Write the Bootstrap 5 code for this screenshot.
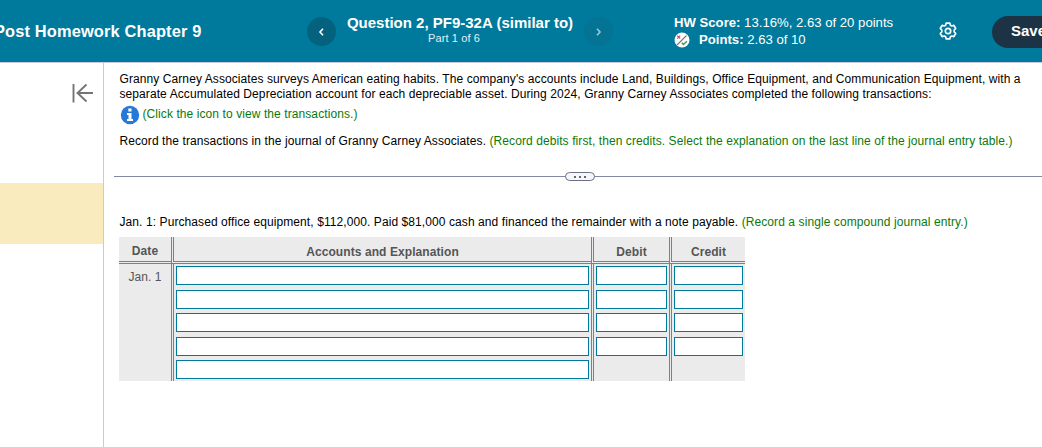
<!DOCTYPE html>
<html lang="en">
<head>
  <meta charset="UTF-8">
  <meta name="viewport" content="width=device-width, initial-scale=1.0">
  <title>Post Homework Chapter 9</title>
  <link rel="stylesheet" href="https://cdn.jsdelivr.net/npm/bootstrap@5.3.0/dist/css/bootstrap.min.css">
  <style>
    body {
      font-family: "Liberation Sans", Arial, sans-serif;
      font-size: 12px;
      line-height: 15px;
      color: #000;
      height: 100vh;
    }

    .top-bar {
      height: 63px;
      padding-top: 1px;
      background: #007a9c;
      border-bottom: 1px solid #c9cce0;
    }

    .hw-title {
      width: 309px;
      margin-left: -6px;
      padding-bottom: 2px;
      font-size: 16.4px;
      letter-spacing: 0.15px;
      line-height: 20px;
    }

    .nav-circle {
      width: 29px;
      height: 29px;
      background: #05627f;
    }

    .nav-circle.next {
      background: #047394;
      color: #9fcbd8;
    }

    .question-box {
      width: 248px;
      padding-bottom: 3px;
    }

    .question-name {
      font-size: 15px;
      line-height: 17px;
    }

    .question-part {
      padding-right: 12px;
      font-size: 11px;
      letter-spacing: 0.1px;
      line-height: 15px;
      color: #e0f0f5;
    }

    .score-box {
      width: 265px;
      margin-left: 61px;
      padding-bottom: 1px;
      font-size: 13.15px;
      line-height: 17px;
    }

    .points-text {
      margin-left: 9px;
    }

    .settings-icon {
      margin: 0 35px 2px 0;
    }

    .save-btn {
      width: 120px;
      height: 32px;
      padding: 0 0 0 19px;
      background: #1b3345;
      font-size: 15px;
    }

    .side-panel {
      width: 104px;
      border-right: 1px solid #c9cad8;
    }

    .current-question {
      height: 61px;
      margin-top: 78px;
      background: #f9ebbd;
    }

    .collapse-icon {
      margin: 20px 9px 0 auto;
    }

    .work-area {
      padding-left: 10px;
      letter-spacing: 0.085px;
    }

    .prompt {
      padding: 9px 0 0 5.5px;
      height: 113px;
    }

    .hint {
      color: #0a7a0a;
    }

    .info-row {
      height: 20px;
      margin: 3px 0 9px;
    }

    .info-text {
      margin: 2px 0 0 3px;
    }

    .split-line {
      height: 1px;
      background: #8488a0;
    }

    .grip {
      width: 30px;
      height: 9px;
      margin-left: 451px;
      gap: 3px;
      border: 1px solid #6b7086;
      background: #f5f5fa;
    }

    .grip i {
      width: 2px;
      height: 2px;
      background: #666;
    }

    .entry-text {
      margin: 38px 0 7px 5.5px;
    }

    .journal {
      width: 626px;
      margin-left: 5px;
      grid-template-columns: 52px 420px 78px 76px;
      grid-template-rows: 27px 117px;
      background: #ebebeb;
      color: #555;
    }

    .journal-head {
      padding-top: 4px;
      font-size: 12px;
      line-height: 20px;
      border-bottom: 3px double #808080;
    }

    .journal-col {
      border-left: 3px double #808080;
    }

    .journal-head.journal-col {
      padding-top: 5px;
    }

    .journal-date {
      padding-top: 6px;
    }

    .cells {
      padding: 2.35px 2px 0;
    }

    .cells input {
      display: block;
      width: 100%;
      height: 19px;
      margin-bottom: 4.4px;
      padding: 0 3px;
      border: 1px solid #007a9c;
      border-radius: 0;
      background: #fff;
    }
  </style>
</head>
<body class="d-flex flex-column overflow-hidden">
<header class="top-bar d-flex align-items-center text-white flex-shrink-0 text-nowrap overflow-hidden">
  <div class="hw-title fw-bold flex-shrink-0">Post Homework Chapter 9</div>
  <div class="nav-circle rounded-circle d-flex align-items-center justify-content-center ms-1 flex-shrink-0">
    <svg width="8" height="10" viewBox="0 0 8 10" fill="none" stroke="currentColor" stroke-width="1.6"><path d="M5 1.8 2 5l3 3.2"/></svg>
  </div>
  <div class="question-box text-center flex-shrink-0">
    <div class="question-name fw-bold">Question 2, PF9-32A (similar to)</div>
    <div class="question-part">Part 1 of 6</div>
  </div>
  <div class="nav-circle next rounded-circle d-flex align-items-center justify-content-center flex-shrink-0">
    <svg width="8" height="10" viewBox="0 0 8 10" fill="none" stroke="currentColor" stroke-width="1.6"><path d="M2 1.8l3 3.2-3 3.2"/></svg>
  </div>
  <div class="score-box flex-shrink-0">
    <div><b>HW Score:</b> <span>13.16%, 2.63 of 20 points</span></div>
    <div class="d-flex align-items-center">
      <svg width="16" height="16" viewBox="0 0 16 16" fill="none">
        <circle cx="8" cy="8" r="7.5" fill="#fff"/>
        <path d="M3.2 3.7l3 3M6.2 3.7l-3 3" stroke="#d04a50" stroke-width="1.2"/>
        <path d="M3 13 12.5 3.5" stroke="#777" stroke-width="1.1"/>
        <path d="M7.8 10.8l1.7 1.7 3.3-3.3" stroke="#3a9a58" stroke-width="1.4"/>
      </svg>
      <div class="points-text"><b>Points:</b> <span>2.63 of 10</span></div>
    </div>
  </div>
  <svg class="settings-icon flex-shrink-0" width="18" height="18" viewBox="0 0 18 18" fill="none" stroke="#fff" stroke-width="1.7" stroke-linejoin="round">
    <path d="M7.2 1.1h3.6l.6 2.1 1.4.8 2.1-.6 1.8 3.1-1.5 1.6v1.8l1.5 1.6-1.8 3.1-2.1-.6-1.4.8-.6 2.1H7.2l-.6-2.1-1.4-.8-2.1.6-1.8-3.1 1.5-1.6V8.1L1.300 6.500l1.800-3.100 2.100.6 1.400-.8z"/>
    <circle cx="9" cy="9" r="2.7"/>
  </svg>
  <button class="save-btn btn rounded-pill text-white fw-bold text-start border-0 flex-shrink-0">Save</button>
</header>

<main class="d-flex flex-grow-1">
  <aside class="side-panel flex-shrink-0">
    <svg class="collapse-icon d-block" width="22" height="22" viewBox="0 0 22 22" fill="none" stroke="#757575" stroke-width="1.9">
      <path d="M1.5 1v18.500M21 10H6M14.500 1.500l-9 8.500 9 8.500"/>
    </svg>
    <div class="current-question"></div>
  </aside>

  <section class="work-area flex-grow-1 text-nowrap">
    <div class="prompt">
      <div>Granny Carney Associates surveys American eating habits. The company's accounts include Land, Buildings, Office Equipment, and Communication Equipment, with a</div>
      <div>separate Accumulated Depreciation account for each depreciable asset. During 2024, Granny Carney Associates completed the following transactions:</div>
      <div class="info-row d-flex hint">
        <svg width="20" height="20" viewBox="0 0 20 20">
          <circle cx="10" cy="10" r="9.2" fill="#2878d8"/>
          <path d="M8.3 3.500h3.200v3H8.300zM7 8h4.500v6H13v2H7v-2h1.500v-4H7z" fill="#fff"/>
        </svg>
        <span class="info-text">(Click the icon to view the transactions.)</span>
      </div>
      <div>Record the transactions in the journal of Granny Carney Associates. <span class="hint">(Record debits first, then credits. Select the explanation on the last line of the journal entry table.)</span></div>
    </div>
    <div class="split-line d-flex align-items-center">
      <div class="grip rounded-pill d-flex align-items-center justify-content-center flex-shrink-0"><i></i><i></i><i></i></div>
    </div>
    <div class="entry-text">Jan. 1: Purchased office equipment, $112,000. Paid $81,000 cash and financed the remainder with a note payable. <span class="hint">(Record a single compound journal entry.)</span></div>
    <div class="journal d-grid text-center">
      <div class="journal-head fw-bold">Date</div>
      <div class="journal-head journal-col fw-bold">Accounts and Explanation</div>
      <div class="journal-head journal-col fw-bold">Debit</div>
      <div class="journal-head journal-col fw-bold">Credit</div>
      <div class="journal-date">Jan. 1</div>
      <div class="journal-col cells">
        <input type="text" aria-label="Account 1">
        <input type="text" aria-label="Account 2">
        <input type="text" aria-label="Account 3">
        <input type="text" aria-label="Account 4">
        <input type="text" aria-label="Explanation">
      </div>
      <div class="journal-col cells">
        <input type="text" aria-label="Debit 1">
        <input type="text" aria-label="Debit 2">
        <input type="text" aria-label="Debit 3">
        <input type="text" aria-label="Debit 4">
      </div>
      <div class="journal-col cells">
        <input type="text" aria-label="Credit 1">
        <input type="text" aria-label="Credit 2">
        <input type="text" aria-label="Credit 3">
        <input type="text" aria-label="Credit 4">
      </div>
    </div>
  </section>
</main>
<script src="https://cdn.jsdelivr.net/npm/bootstrap@5.3.0/dist/js/bootstrap.bundle.min.js"></script>
</body>
</html>
